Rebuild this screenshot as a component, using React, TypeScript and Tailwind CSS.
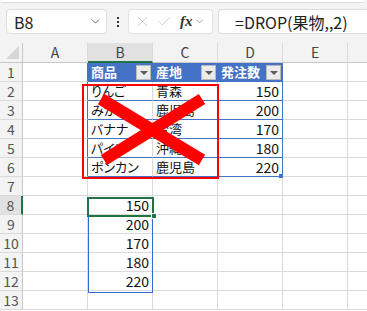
import React from 'react';
import { ChevronDown, X, Check } from 'lucide-react';

const COLS = ['A', 'B', 'C', 'D', 'E', 'F'];
const FRUIT = ['りんご', 'みかん', 'バナナ', 'パイン', 'ポンカン'];
const ORIGIN = ['青森', '鹿児島', '台湾', '沖縄', '鹿児島'];
const QTY = ['150', '200', '170', '180', '220'];

function Drop() {
  return (
    <div className="absolute right-[1px] top-[2px] w-[15px] h-[15px] bg-[#ebebeb] border border-[#b9b9b9] flex items-center justify-center">
      <div className="w-0 h-0 border-l-[4px] border-r-[4px] border-t-[4px] border-l-transparent border-r-transparent border-t-[#5a5a5a]" />
    </div>
  );
}

function CellBox({ r, c }: { r: number; c: number }) {
  const inTable = r >= 1 && r <= 6 && c >= 1 && c <= 3;
  let borderB = 'border-b-[#dadada]';
  let borderR = 'border-r-[#dadada]';
  if (inTable) borderB = 'border-b-[#4472c4]';
  if (r >= 1 && r <= 6 && (c === 0 || c === 3)) borderR = 'border-r-[#4472c4]';
  if (r === 1 && (c === 1 || c === 2)) borderR = 'border-r-[#4472c4]';

  let content: React.ReactNode = null;
  let cls = '';
  const jp = "pl-[3px] text-[13px] [font-feature-settings:'palt']";
  if (r === 1 && inTable) {
    cls = 'bg-[#4472c4] text-white font-bold';
    const label = ['商品', '産地', '発注数'][c - 1];
    content = (
      <>
        <span className={jp}>{label}</span>
        <Drop />
      </>
    );
  } else if (r >= 2 && r <= 6 && inTable) {
    if (c === 1) content = <span className={jp}>{FRUIT[r - 2]}</span>;
    if (c === 2) content = <span className={jp}>{ORIGIN[r - 2]}</span>;
    if (c === 3) content = <span className="ml-auto pr-[3px]">{QTY[r - 2]}</span>;
  } else if (r >= 8 && r <= 12 && c === 1) {
    content = <span className="ml-auto pr-[3px]">{QTY[r - 8]}</span>;
  }

  return (
    <div className={`relative flex items-end border-b border-r ${borderB} ${borderR} ${cls} text-[14px] leading-[18px] ${r === 1 && inTable ? '' : 'text-[#111]'}`}>
      {content}
    </div>
  );
}

export default function App() {
  const rows = Array.from({ length: 13 }, (_, i) => i + 1);
  return (
    <div className="w-[367px] h-[311px] overflow-hidden bg-white relative font-['Noto_Sans_CJK_JP','Noto_Sans',sans-serif]">
      {/* Toolbar */}
      <div className="h-[43px] bg-[#f3f3f3] flex flex-col">
        <div className="h-[3px] bg-white border-b border-[#dcdcdc] rounded-b-[4px] mr-[2px]" />
        <div className="flex items-center pl-[6px] mt-[6px] h-[25px]">
          <div className="w-[101px] h-[25px] bg-white border border-[#dedede] rounded-[4px] flex items-center pl-[7px] pr-[4px] shrink-0">
            <span className="text-[16px] text-[#222] leading-none">B8</span>
            <ChevronDown className="ml-auto text-[#555]" size={13} strokeWidth={1.6} />
          </div>
          <div className="w-[21px] h-[25px] flex flex-col items-center justify-center gap-[2px] shrink-0">
            <div className="w-[2px] h-[2px] bg-[#333]" />
            <div className="w-[2px] h-[2px] bg-[#333]" />
            <div className="w-[2px] h-[2px] bg-[#333]" />
          </div>
          <div className="w-[85px] h-[25px] bg-white border border-[#e2e2e2] rounded-[4px] flex items-center pl-[5px] shrink-0">
            <X className="text-[#c4c4c4]" size={17} strokeWidth={1.2} />
            <Check className="text-[#c4c4c4] ml-[5px]" size={17} strokeWidth={1.2} />
            <span className="ml-[7px] font-['Liberation_Serif',serif] italic font-bold text-[15px] text-[#333] leading-none">fx</span>
            <ChevronDown className="ml-[1px] text-[#777]" size={11} strokeWidth={1.5} />
          </div>
          <div className="ml-[5px] w-[150px] h-[25px] bg-white border border-[#dedede] border-r-0 rounded-l-[4px] flex items-center pl-[16px] shrink-0">
            <span className="text-[16px] text-[#222] leading-none whitespace-nowrap">=DROP(果物,,2)</span>
          </div>
        </div>
      </div>

      {/* Sheet */}
      <div className="relative">
        <div className="grid grid-cols-[23px_65px_65px_65px_65px_65px_65px] grid-rows-[20px_repeat(13,19px)] w-[413px]">
          {/* corner */}
          <div className="bg-[#f3f3f3] border-r border-b border-[#c8c8c8] relative">
            <div className="absolute right-[3px] bottom-[3px] w-0 h-0 border-l-[13px] border-b-[13px] border-l-transparent border-b-[#d6d6d6]" />
          </div>
          {COLS.map((c) => (
            <div
              key={c}
              className={`flex items-center justify-center text-[14px] text-[#444] border-r border-[#dadada] ${
                c === 'B'
                  ? 'bg-[#e1e1e1] border-b-[2px] border-b-[#217346] text-[#1d5e3a]'
                  : 'bg-[#f3f3f3] border-b border-b-[#c8c8c8]'
              }`}
            >
              {c === 'F' ? '' : c}
            </div>
          ))}
          {rows.map((r) => (
            <React.Fragment key={r}>
              <div
                className={`flex items-center justify-center text-[14px] text-[#555] border-b border-b-[#dadada] ${
                  r === 8
                    ? 'bg-[#e1e1e1] border-r-[2px] border-r-[#217346]'
                    : 'bg-[#f3f3f3] border-r border-r-[#c8c8c8]'
                }`}
              >
                {r}
              </div>
              {COLS.map((_, c) => (
                <CellBox key={c} r={r} c={c} />
              ))}
            </React.Fragment>
          ))}
        </div>

        {/* table resize handle */}
        <div className="absolute left-[279px] top-[131px] w-[4px] h-[4px] bg-[#4472c4]" />

        {/* spill range border */}
        <div className="absolute left-[88px] top-[154px] w-[65px] h-[96px] border border-[#2f6bd1]" />
        {/* active cell */}
        <div className="absolute left-[87px] top-[154px] w-[67px] h-[20px] border-2 border-[#217346]" />
        <div className="absolute left-[151px] top-[170px] w-[6px] h-[6px] bg-[#217346] border border-white" />

        {/* red rectangle */}
        <div className="absolute left-[82px] top-[41px] w-[137px] h-[95px] border-2 border-[#ff0000]" />
        {/* red X */}
        <svg className="absolute left-0 top-0" width="367" height="268" viewBox="0 0 367 268">
          <line x1="101" y1="56" x2="202" y2="117" stroke="#ff0000" strokeWidth="12" />
          <line x1="104" y1="117" x2="202" y2="56" stroke="#ff0000" strokeWidth="12" />
        </svg>
      </div>
    </div>
  );
}
